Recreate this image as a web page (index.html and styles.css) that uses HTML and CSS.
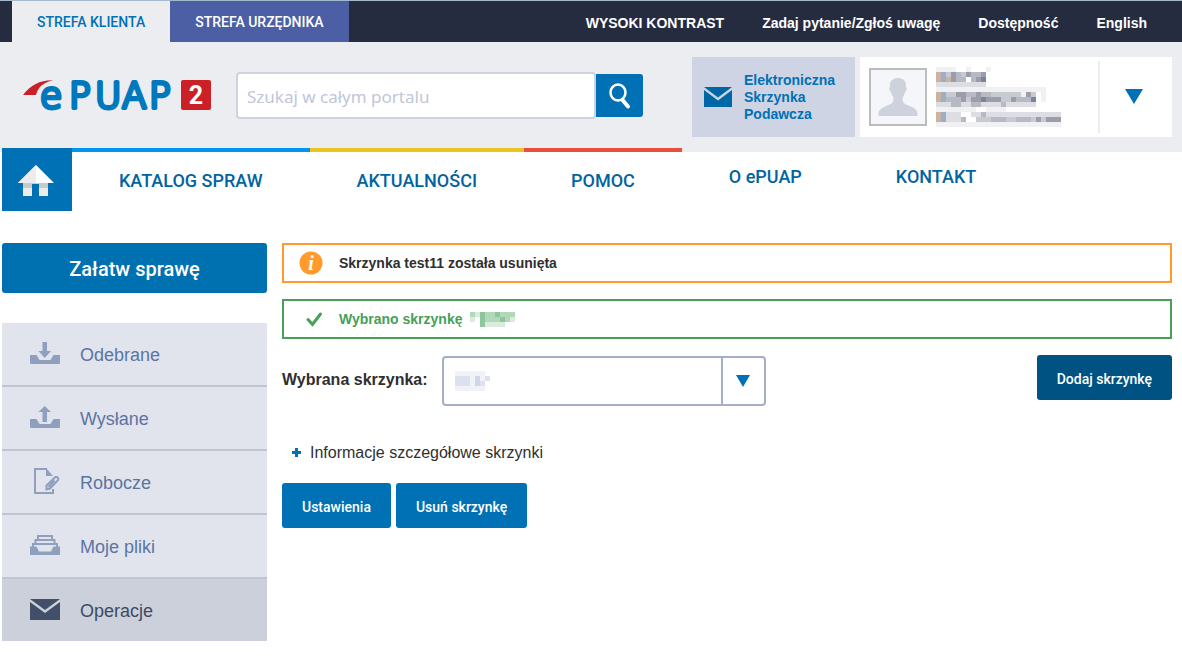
FILE: index.html
```html
<!DOCTYPE html>
<html lang="pl">
<head>
<meta charset="utf-8">
<meta name="viewport" content="width=device-width, initial-scale=1">
<title>ePUAP – Operacje</title>
<link rel="stylesheet" href="styles.css">
</head>
<body>
<div class="topbar">
  <nav class="zones" aria-label="Strefy">
    <a class="zone zone-active" href="#">STREFA KLIENTA</a>
    <a class="zone" href="#">STREFA URZĘDNIKA</a>
  </nav>
  <nav class="toplinks" aria-label="Narzędzia">
    <a href="#">WYSOKI KONTRAST</a>
    <a href="#">Zadaj pytanie/Zgłoś uwagę</a>
    <a href="#">Dostępność</a>
    <a href="#">English</a>
  </nav>
</div>

<header class="header">
  <a class="logo" href="#" aria-label="ePUAP 2">
    <svg width="190" height="56" viewBox="0 -10 190 56">
      <path fill="#cb2026" d="M0 18C8 8 17 3 30 3.300C20 6 15 10 13 18z"/>
      <g class="logo-word">
        <text x="17" y="31">e</text>
        <text x="46" y="31">P</text>
        <text x="72" y="31">U</text>
        <text x="99" y="31">A</text>
        <text x="126" y="31">P</text>
      </g>
      <rect x="158" y="3" width="30" height="30" rx="2" fill="#cb2026"/>
      <text class="logo-two" x="173" y="27" text-anchor="middle">2</text>
    </svg>
  </a>
  <form class="search" role="search">
    <input type="text" placeholder="Szukaj w całym portalu" aria-label="Szukaj w całym portalu">
    <button type="button" aria-label="Szukaj">
      <svg width="24" height="28" viewBox="0 0 24 28" fill="none" stroke="#fff" stroke-linecap="round">
        <ellipse cx="10" cy="10.500" rx="7.500" ry="8" stroke-width="2.500"/>
        <path d="M14.500 18L20 24.500" stroke-width="4"/>
      </svg>
    </button>
  </form>
  <div class="account">
    <a class="inbox" href="#">
      <svg width="28" height="20" viewBox="0 0 28 20" fill="#0067a6"><path d="M0 0H28L14 10.500z"/><path d="M0 3L14 13.500L28 3V20H0z"/></svg>
      <span>Elektroniczna<br>Skrzynka<br>Podawcza</span>
    </a>
    <div class="user">
      <span class="avatar">
        <svg width="40" height="40" viewBox="0 0 40 40" fill="#cdd2dc"><path d="M20 1c6 0 8.500 3.500 8 9 1.200.5.800 4-1 5-.5 3-2 4.500-2.500 6 0 4 1 5.500 5 7C34 30 39 32 39.500 36v3H.5v-3C1 32 6 30 10.500 28c4-1.500 5-3 5-7-.500-1.500-2-3-2.500-6-1.800-1-2.200-4.500-1-5-.5-5.500 2-9 8-9z"/></svg>
      </span>
      <svg class="mosaic user-name" width="125" height="60" viewBox="0 0 25 12" aria-hidden="true">
        <path stroke="#f1f1f4" d="M0 .5h4M6 .5h1M10 .5h1M0 4.500h22M17 5.500h1M21 5.500h1M21 6.500h1M0 8.500h8M10 8.500h4M0 11.500h25M1 7.500h1"/>
        <path stroke="#dcdee3" d="M0 3.500h10M0 7.500h20M2 9.500h3M7 9.500h18M2 10.500h3"/>
        <path stroke="#c8cad2" d="M1 1.500h9M1 2.500h5M7 2.500h2M1 5.500h16M1 6.500h19M8 10.500h17M18 5.500h2"/>
        <path stroke="#b7b9c3" d="M4 1.500h1M7 1.500h2M4 2.500h2M7 2.500h1M2 6.500h3M6 5.500h2M9 5.500h2M16 6.500h3M3 7.500h2M7 7.500h2M13 7.500h1M9 9.500h1M11 10.500h3M16 10.500h3M5 10.500h1"/>
        <path stroke="#9c9cab" d="M3 1.500h1M6 1.500h1M9 1.500h1M3 2.500h1M8 2.500h1M4 5.500h2M8 5.500h1M5 6.500h1M7 6.500h2M10 6.500h3M15 6.500h1M18 5.500h1M20 10.500h1M22 10.500h3"/>
        <path stroke="#9cb0c4" d="M1 1.500h1M1 2.500h1M1 5.500h1M1 6.500h1M1 9.500h1M1 10.500h1"/>
        <path stroke="#cbb2a2" d="M0 1.500h1M0 2.500h1M2 2.500h1M0 5.500h1M0 6.500h1M0 9.500h1M0 10.500h1"/>
        <path stroke="#7b8498" d="M9 2.500h1M9 6.500h1M19 6.500h1"/>
      </svg>
      <button class="user-menu" type="button" aria-label="Menu użytkownika">
        <svg width="18" height="15" viewBox="0 0 18 15" fill="#0071b5"><path d="M0 0H18L9 15z"/></svg>
      </button>
    </div>
  </div>
</header>

<nav class="mainnav" aria-label="Menu główne">
  <a class="home" href="#" aria-label="Strona główna">
    <svg width="36" height="32" viewBox="0 0 36 32">
      <path fill="#fff" d="M18 0L36 18H0z"/><path fill="#ececec" d="M18 0V18H0z"/>
      <path fill="#ececec" d="M5 18h9v13H5zM21 18h9v13h-9z"/>
      <path fill="#cacaca" d="M5 18h25v5h-9v-4h-7v4H5z"/>
    </svg>
  </a>
  <a class="lined blue" href="#">KATALOG SPRAW</a>
  <a class="lined yellow" href="#">AKTUALNOŚCI</a>
  <a class="lined red" href="#">POMOC</a>
  <a class="plain" href="#">O ePUAP</a>
  <a class="plain" href="#">KONTAKT</a>
</nav>

<div class="page">
  <aside class="sidebar">
    <button class="btn btn-large" type="button">Załatw sprawę</button>
    <nav class="menu" aria-label="Skrzynka">
      <a href="#">
        <svg width="30" height="24" viewBox="0 0 30 24" fill="#8f9fbe"><path d="M12.500 0h4.500v9h4L14.700 16 8.500 9h4z"/><path d="M0 13h6.500l3 5h11l3-5H30v8q0 1-1 1H1q-1 0-1-1z"/></svg>
        <span>Odebrane</span></a>
      <a href="#">
        <svg width="30" height="24" viewBox="0 0 30 24" fill="#8f9fbe"><path d="M12.500 16h4.500V6h4L14.700 0 8.500 6h4z"/><path d="M0 13h6.500l3 5h11l3-5H30v8q0 1-1 1H1q-1 0-1-1z"/></svg>
        <span>Wysłane</span></a>
      <a href="#">
        <svg width="30" height="30" viewBox="0 0 30 30" fill="none" stroke="#8f9fbe" stroke-width="2"><path d="M23 22v4H5V2h12"/><path d="M16 1l7 8h-7z" fill="#8f9fbe" stroke="none"/><path d="M16.500 22.500v-4l9-8.500q2-.5 2.800 1.300.3 1.200-.3 1.900l-8 8.300zM18.500 20l6-6.500"/></svg>
        <span>Robocze</span></a>
      <a href="#">
        <svg width="30" height="24" viewBox="0 0 30 24" fill="none" stroke="#8f9fbe" stroke-width="2"><path d="M8 5V2h14v3M5.500 9V6h19v3M3 13v-3h24v3"/><path fill="#8f9fbe" stroke="none" d="M0 12.500h6.500l2.500 5h12l2.500-5H30V21H0z"/></svg>
        <span>Moje pliki</span></a>
      <a class="current" href="#">
        <svg width="30" height="23" viewBox="0 0 30 23" fill="#414f69"><path d="M0 0H30L15 11z"/><path d="M0 3L15 14L30 3V21H0z"/></svg>
        <span>Operacje</span></a>
    </nav>
  </aside>

  <main class="content">
    <div class="alert alert-info" role="status">
      <svg width="24" height="24" viewBox="0 0 24 24"><circle cx="12" cy="12" r="11.500" fill="#ff9a2b"/><text class="info-i" x="12" y="19" text-anchor="middle">i</text></svg>
      <span>Skrzynka test11 została usunięta</span>
    </div>
    <div class="alert alert-ok" role="status">
      <svg width="24" height="24" viewBox="0 0 24 24" fill="none" stroke="#46a058" stroke-width="3" stroke-linecap="round"><path d="M9 12.500L13.500 17.500L21.500 7"/></svg>
      <span>Wybrano skrzynkę</span>
      <svg class="mosaic ok-name" width="45" height="15" viewBox="0 0 9 3" aria-hidden="true">
        <path stroke="#b2d8ba" d="M0 .5h9M2 1.500h6"/>
        <path stroke="#8ec59b" d="M2 .5h1M5 .5h1M2 1.500h1M6 1.500h1"/>
        <path stroke="#d9ecdd" d="M1 .5h1M0 1.500h1M8 1.500h1M3 2.500h4"/>
        <path stroke="#8ec59b" d="M2 2.500h1"/>
      </svg>
    </div>

    <div class="pick">
      <label for="box">Wybrana skrzynka:</label>
      <div class="select">
        <select id="box"><option></option></select>
        <svg class="mosaic box-name" width="35" height="20" viewBox="0 0 7 4" aria-hidden="true">
          <path stroke="#f0f2f7" d="M0 .5h6M3 1.500h1M5 1.500h1M3 2.500h1M0 3.500h6"/>
          <path stroke="#dde1ec" d="M0 1.500h3M0 2.500h3M6 1.500h1M5 2.500h1"/>
          <path stroke="#d0d6e6" d="M4 1.500h1M4 2.500h1"/>
        </svg>
        <span class="select-arrow"><svg width="14" height="12" viewBox="0 0 14 12" fill="#0071b5"><path d="M0 0H14L7 12z"/></svg></span>
      </div>
      <button class="btn btn-dark" type="button">Dodaj skrzynkę</button>
    </div>

    <button class="details" type="button" aria-expanded="false">
      <svg width="9" height="9" viewBox="0 0 9 9" fill="#0071b5"><path d="M3 0h3v3h3v3H6v3H3V6H0V3h3z"/></svg>
      Informacje szczegółowe skrzynki
    </button>

    <div class="actions">
      <button class="btn" type="button">Ustawienia</button>
      <button class="btn" type="button">Usuń skrzynkę</button>
    </div>
  </main>
</div>
</body>
</html>
```
FILE: styles.css
```css
* { box-sizing: border-box; }
body {
  margin: 0;
  background: #fff;
  color: #2f2f2f;
  font-family: "Liberation Sans", Arial, sans-serif;
  font-size: 16px;
}
a { color: inherit; text-decoration: none; }
button { border: 0; margin: 0; font: inherit; cursor: pointer; }
svg { display: block; flex: none; }
.mosaic { shape-rendering: crispEdges; stroke-width: 1; fill: none; }

.topbar {
  display: flex;
  justify-content: space-between;
  height: 42px;
  padding: 0 35px 0 12px;
  border-top: 1px solid #a4b9cc;
  background: #262c40;
  color: #fff;
}
.zones { display: flex; }
.zone {
  display: flex;
  align-items: center;
  padding: 0 25px;
  background: #4c5fa5;
  font: 500 14px "Roboto", sans-serif;
}
.zone-active { background: #ecedf1; color: #0071b5; }
.toplinks {
  display: flex;
  align-items: center;
  gap: 38px;
  padding-top: 2px;
  font-size: 14px;
  font-weight: bold;
}

.header {
  display: flex;
  align-items: center;
  height: 106px;
  padding: 0 10px 0 23px;
  background: #ecedf1;
}
.logo { margin-right: 23px; }
.logo-word {
  fill: #0078be;
  stroke: #0078be;
  stroke-width: 4;
  stroke-linejoin: round;
  font: 200 36px "DejaVu Sans", sans-serif;
}
.logo-two { fill: #fff; font: 700 25px "Roboto", sans-serif; }
.search { display: flex; align-items: center; width: 407px; padding-top: 1px; }
.search input {
  flex: 1;
  min-width: 0;
  height: 47px;
  padding: 2px 9px 0;
  border: 2px solid #cdd2e2;
  border-radius: 4px;
  background: #fff;
  font: 17px "Noto Sans", sans-serif;
}
.search input::placeholder { color: #bfc6da; opacity: 1; }
.search button {
  display: grid;
  place-items: center;
  width: 47px;
  height: 43px;
  padding: 0;
  border-radius: 0 3px 3px 0;
  background: #0071b5;
}
.account { display: flex; gap: 5px; margin-left: auto; padding-top: 4px; }
.inbox {
  display: flex;
  align-items: center;
  gap: 12px;
  width: 163px;
  height: 80px;
  padding-left: 12px;
  background: #ced4e3;
  color: #0071b5;
  font-size: 14px;
  font-weight: bold;
  line-height: 17px;
}
.user { display: flex; align-items: center; width: 312px; padding-left: 9px; background: #fff; }
.avatar {
  display: grid;
  place-items: center;
  width: 58px;
  height: 58px;
  border: 2px solid #bcbcbc;
  background: #f5f6f9;
}
.user-name { margin-left: 9px; }
.user-menu {
  display: grid;
  place-items: center;
  width: 74px;
  height: 72px;
  margin-left: auto;
  padding: 0 5px 2px 0;
  border-left: 2px solid #ecedf1;
  background: none;
}

.mainnav {
  display: flex;
  height: 63px;
  padding-left: 2px;
  background: linear-gradient(#ecedf1 4px, #fff 4px);
  color: #00659f;
  font: 500 18px/24px "Roboto", sans-serif;
}
.home {
  display: grid;
  place-items: center;
  width: 70px;
  padding: 2px 3px 0 0;
  background: #0071b5;
}
.lined { padding: 17px 47px 0; border-top: 4px solid; }
.plain { padding: 17px 47px 0; }
.blue { border-color: #0095ee; }
.yellow { border-color: #edc31f; }
.red { border-color: #e94e3c; }

.page { display: flex; gap: 15px; padding: 32px 10px 24px 2px; }
.sidebar { width: 265px; flex: none; }
.btn {
  height: 45px;
  padding: 2px 20px 0;
  border-radius: 3px;
  background: #0071b5;
  color: #fff;
  font: 500 14px "Roboto", sans-serif;
}
.btn-large { width: 100%; height: 50px; background: #0071b0; font-size: 20px; }
.btn-dark { margin-left: auto; background: #005282; }
.menu { display: flex; flex-direction: column; margin-top: 30px; }
.menu a {
  display: flex;
  align-items: center;
  gap: 20px;
  height: 64px;
  padding-left: 28px;
  border-bottom: 2px solid #bec5d3;
  background: #e1e4ec;
  color: #5c74a2;
  font-size: 18px;
}
.menu span { padding-top: 2px; }
.menu .current { height: 62px; border: 0; background: #ccd0da; color: #3d4a63; }

.content { flex: 1; min-width: 0; }
.alert {
  display: flex;
  align-items: center;
  height: 40px;
  margin-bottom: 16px;
  padding-left: 15px;
  border: 2px solid;
  font-size: 14px;
  font-weight: bold;
}
.alert span { margin-left: 16px; }
.alert-info { border-color: #ff9a2b; }
.alert-ok { border-color: #46a058; color: #46a058; }
.info-i { fill: #fff; font: italic bold 20px "Liberation Serif", serif; }
.ok-name { margin-left: 8px; }
.pick { display: flex; align-items: flex-start; }
.pick label { width: 160px; padding-top: 16px; font-weight: bold; }
.select { position: relative; width: 324px; height: 50px; margin-top: 1px; }
.select select {
  width: 100%;
  height: 100%;
  padding: 0 56px 0 12px;
  border: 2px solid #a3aec7;
  border-radius: 4px;
  background: #fff;
  appearance: none;
  font: inherit;
}
.box-name { position: absolute; left: 13px; top: 15px; pointer-events: none; }
.select-arrow {
  position: absolute;
  inset: 2px 2px 2px auto;
  display: grid;
  place-items: center;
  width: 43px;
  padding-right: 2px;
  border-left: 2px solid #a3aec7;
  pointer-events: none;
}
.details {
  display: flex;
  align-items: center;
  gap: 9px;
  margin: 36px 0 20px 10px;
  padding: 0;
  background: none;
  color: #2f2f2f;
  line-height: 21px;
}
.actions { display: flex; gap: 5px; }
```
